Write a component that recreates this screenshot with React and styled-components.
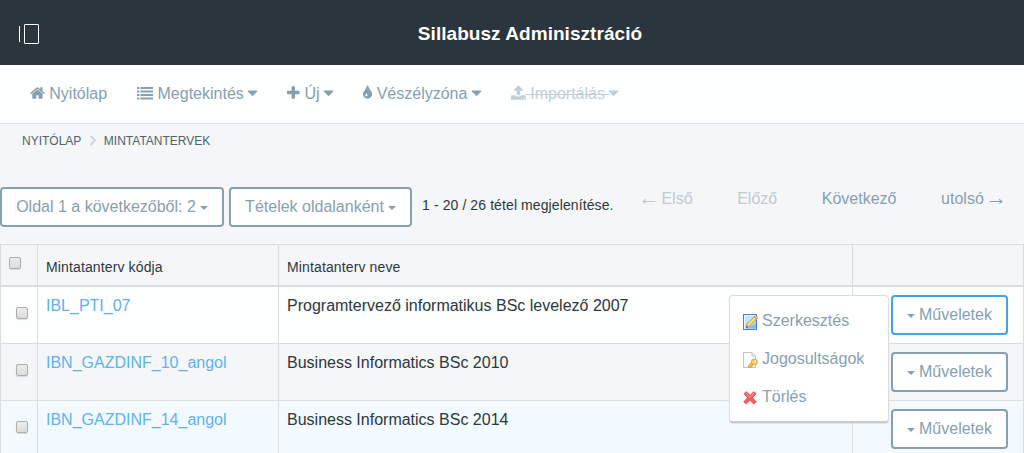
import React from "react";
import styled, { createGlobalStyle } from "styled-components";

const Global = createGlobalStyle`
  * { box-sizing: border-box; }
  html, body { margin: 0; height: 100%; overflow: hidden; }
  body {
    background: #f5f6f8;
    color: #2c3840;
    font: 16px/24px "Liberation Sans", Arial, sans-serif;
  }
`;

const slate = "#869fb1";
const line = "#dcdddf";

const Page = styled.div`
  width: 1024px;
  height: 453px;
  overflow: hidden;
`;

const Header = styled.header`
  display: grid;
  grid-template-columns: 81px 1fr 100px;
  align-items: center;
  height: 65px;
  padding: 0 0 0 19px;
  background: #2a353d;
`;

const Toggle = styled.button`
  display: flex;
  gap: 4px;
  width: 20px;
  height: 18px;
  padding: 0;
  margin-top: 3px;
  border: 0;
  background: none;
  align-items: center;
  &::before { content: ""; width: 1px; height: 16px; background: #fff; }
  &::after { content: ""; width: 15px; height: 18px; border: 1px solid #fff; border-radius: 1px; }
`;

const Title = styled.h1`
  margin: 0 -36px 0 0;
  padding-top: 2px;
  color: #fff;
  font-size: 19px;
  letter-spacing: 0.05px;
  line-height: 24px;
  text-align: center;
  white-space: nowrap;
`;

const Nav = styled.nav`
  display: flex;
  gap: 30px;
  height: 59px;
  padding: 17px 30px 0;
  background: #fdfefe;
  border-bottom: 1px solid #dfe3e7;
`;

const NavItem = styled.a`
  color: ${slate};
  white-space: nowrap;
  opacity: ${(p) => (p.$off ? 0.5 : 1)};
  text-decoration: ${(p) => (p.$off ? "line-through" : "none")};
`;

const Glyph = styled.svg`
  height: 16px;
  width: ${(p) => p.$w / 112}px;
  vertical-align: -2.3px;
  fill: currentColor;
`;

const glyphs = {
  home: [64, 1664, "M1472 992v480q0 26-19 45t-45 19h-384v-384h-256v384h-384q-26 0-45-19t-19-45v-480q0-1 .5-3t.5-3l575-474 575 474q1 2 1 6zm223-69l-62 74q-8 9-21 11h-3q-13 0-21-7l-692-577-692 577q-12 8-24 7-13-2-21-11l-62-74q-8-10-7-23.5t11-21.5l719-599q32-26 76-26t76 26l244 204v-195q0-14 9-23t23-9h192q14 0 23 9t9 23v408l219 182q10 8 11 21.5t-7 23.5z"],
  list: [0, 1792, "M0 224h256v224H0zM384 224h1408v224H384zM0 616h256v224H0zM384 616h1408v224H384zM0 1008h256v224H0zM384 1008h1408v224H384zM0 1400h256v224H0zM384 1400h1408v224H384z"],
  plus: [192, 1408, "M1600 736v192q0 40-28 68t-68 28h-416v416q0 40-28 68t-68 28h-192q-40 0-68-28t-28-68v-416h-416q-40 0-68-28t-28-68v-192q0-40 28-68t68-28h416v-416q0-40 28-68t68-28h192q40 0 68 28t28 68v416h416q40 0 68 28t28 68z"],
  drop: [384, 1024, "M896 1152q0-36-20-69-1-1-15.5-22.5t-25.5-38-25-44-21-50.5q-4-16-21-16t-21 16q-7 23-21 50.5t-25 44-25.5 38-15.5 22.5q-20 33-20 69 0 53 37.5 90.5t90.5 37.5 90.5-37.5 37.5-90.5zm512-128q0 212-150 362t-362 150-362-150-150-362q0-145 81-275 6-9 62.5-90.5t101-151 99.5-178 83-201.5q9-30 34-47t51-17 51.5 17 33.5 47q28 93 83 201.5t99.5 178 101 151 62.5 90.5q81 127 81 275z"],
  upload: [64, 1664, "M1344 1472q0-26-19-45t-45-19-45 19-19 45 19 45 45 19 45-19 19-45zm256 0q0-26-19-45t-45-19-45 19-19 45 19 45 45 19 45-19 19-45zm128-224v320q0 40-28 68t-68 28h-1472q-40 0-68-28t-28-68v-320q0-40 28-68t68-28h427q21 56 70.5 92t110.5 36h256q61 0 110.5-36t70.5-92h427q40 0 68 28t28 68zm-325-648q-17 40-59 40h-256v448q0 26-19 45t-45 19h-256q-26 0-45-19t-19-45v-448h-256q-42 0-59-40-17-39 14-69l448-448q18-19 45-19t45 19l448 448q31 30 14 69z"],
  caret: [384, 1024, "M1440 690q0 26-19 45l-480 470q-19 19-45 19t-45-19l-480-470q-19-19-19-45t19-45 45-19h960q26 0 45 19t19 45z"],
};

const Icon = ({ name }) => {
  const [x, w, d] = glyphs[name];
  return (
    <Glyph $w={w} viewBox={`${x} 0 ${w} 1792`} overflow="visible">
      <path d={d} />
    </Glyph>
  );
};

const Crumbs = styled.div`
  display: flex;
  align-items: center;
  height: 34px;
  padding: 0 22px;
  font-size: 12px;
  color: #4f626e;
  text-transform: uppercase;
`;

const Chevron = styled.svg`
  width: 8px;
  height: 11px;
  margin: 0 7px 1px 7.5px;
  fill: none;
  stroke: #d3d8dd;
  stroke-width: 2.2;
`;

const Toolbar = styled.div`
  display: flex;
  height: 86px;
  padding-top: 29px;
`;

const Button = styled.button`
  display: flex;
  align-items: center;
  justify-content: center;
  gap: 4px;
  width: ${(p) => p.$w}px;
  height: 40px;
  padding: 0;
  margin-right: 5px;
  border: 2px solid ${(p) => (p.$active ? "#42a3e9" : slate)};
  border-radius: 4px;
  background: #fff;
  color: ${slate};
  font: inherit;
  white-space: nowrap;
  flex: none;
`;

const Caret = styled.i`
  border: 4px solid transparent;
  border-top-color: currentColor;
  border-bottom: 0;
  margin-top: 2px;
`;

const Summary = styled.span`
  width: 219px;
  margin-left: 5px;
  padding-top: 6px;
  font-size: 14px;
  letter-spacing: 0.1px;
  white-space: nowrap;
`;

const Pager = styled.div`
  display: flex;
  gap: 44.6px;
`;

const PageLink = styled.a`
  color: ${(p) => (p.$off ? "#bfcbd3" : slate)};
  white-space: nowrap;
`;

const Arrow = styled.span`
  display: inline-block;
  width: 16px;
  margin: 0;
  font-size: 22px;
  line-height: 0;
  text-indent: -3px;
  vertical-align: -1px;
`;

const Row = styled.div`
  display: grid;
  grid-template-columns: 37px 241px 574px 172px;
  height: ${(p) => (p.$head ? 43 : 57)}px;
  background: ${(p) => p.$bg || "transparent"};
  border-top: ${(p) => (p.$head ? `1px solid ${line}` : "0")};
  border-bottom: ${(p) => (p.$head ? 2 : 1)}px solid ${line};
  font-size: ${(p) => (p.$head ? 14 : 16)}px;
  letter-spacing: ${(p) => (p.$head ? "0.13px" : "0")};
`;

const Cell = styled.div`
  position: relative;
  border-left: 1px solid ${line};
  padding: ${(p) => (p.$head ? 10 : 7)}px 8px 0;
  white-space: nowrap;
  &:last-child { border-right: 1px solid ${line}; padding: 8px 0 0 38px; }
`;

const Check = styled.input.attrs({ type: "checkbox" })`
  appearance: none;
  display: block;
  width: 12px;
  height: 12px;
  margin: ${(p) => (p.$head ? "2px 0 0" : "13px 0 0 7px")};
  border: 1px solid #adadad;
  border-radius: 2px;
  background: linear-gradient(#ececec, #dcdcdc);
  box-shadow: 0 1px 1px rgba(0, 0, 0, 0.12);
`;

const Link = styled.a`
  color: #5fb2ee;
`;

const Menu = styled.div`
  position: absolute;
  z-index: 2;
  top: 8px;
  left: -124px;
  width: 160px;
  height: 128px;
  padding: 6px 0 0 12px;
  border: 1px solid #dadcdf;
  border-bottom: 2px solid #c8cacc;
  border-radius: 4px;
  background: #fff;
  box-shadow: 0 1px 1px rgba(0, 0, 0, 0.08);
`;

const MenuItem = styled.a`
  display: flex;
  align-items: center;
  gap: 4px;
  height: 38px;
  color: ${slate};
  svg { width: 16px; height: 16px; margin-top: 2px; flex: none; }
`;

const EditIcon = () => (
  <svg viewBox="0 0 16 16">
    <rect x="1.5" y=".5" width="13" height="15" fill="#c4e2fb" stroke="#4582d0" />
    <path d="M2.5 1.5h11M2.5 2v13" stroke="#edf7ff" fill="none" />
    <path d="M3 14.5h11V9L9.5 12z" fill="#83bdf3" />
    <path d="M5 10L12 3l2.6 2.6L7.7 12.5l-3.5 1z" fill="#f5cf6a" stroke="#b08840" strokeWidth=".7" />
    <path d="M6.2 10.8l7-7" stroke="#fff0a0" />
    <path d="M12 3l1-1q1-.6 2 .4t.5 2L14.6 5.6z" fill="#f2b483" stroke="#b8896a" strokeWidth=".6" />
    <path d="M3.9 13.8l.6-2 1.6 1.5z" fill="#4b4238" />
  </svg>
);

const KeyIcon = () => (
  <svg viewBox="0 0 16 16">
    <path d="M1.5 .5H10l3.5 3.5v11.5h-12z" fill="#fafafa" stroke="#c4c4c4" />
    <path d="M10 .5v3.5h3.5" fill="#eee" stroke="#c4c4c4" />
    <path d="M9.8 10L6.5 13.4v2.1h2.4v-1h1.3v-1.2l1.6-1z" fill="#f5bf48" stroke="#d29a3c" strokeWidth=".8" />
    <circle cx="12.4" cy="10" r="3" fill="#f9cf65" stroke="#d29a3c" strokeWidth=".8" />
    <circle cx="13.3" cy="9.2" r=".9" fill="#fff" />
  </svg>
);

const DeleteIcon = () => (
  <svg viewBox="0 0 16 16">
    <path d="M4.2 1.6L8 5.3l3.8-3.7L14 3.8 10.5 7.8l3.7 4-2.3 2.3L8 10.3l-3.9 3.8-2.3-2.3 3.7-4L2 3.8z" fill="#fa6062" stroke="#e2454a" strokeWidth=".8" strokeLinejoin="round" />
    <path d="M4.1 3.2L8 6.9l3.9-3.7" fill="none" stroke="#ff9a96" />
  </svg>
);

const rows = [
  ["IBL_PTI_07", "Programtervező informatikus BSc levelező 2007", "#fdfefe"],
  ["IBN_GAZDINF_10_angol", "Business Informatics BSc 2010", "#f5f6f8"],
  ["IBN_GAZDINF_14_angol", "Business Informatics BSc 2014", "#f2faff"],
];

export default function App() {
  return (
    <Page>
      <Global />
      <Header>
        <Toggle aria-label="Menü" />
        <Title>Sillabusz Adminisztráció</Title>
      </Header>
      <Nav>
        <NavItem><Icon name="home" /> Nyitólap</NavItem>
        <NavItem><Icon name="list" /> Megtekintés <Icon name="caret" /></NavItem>
        <NavItem><Icon name="plus" /> Új <Icon name="caret" /></NavItem>
        <NavItem><Icon name="drop" /> Vészélyzóna <Icon name="caret" /></NavItem>
        <NavItem $off><Icon name="upload" /> Importálás <Icon name="caret" /></NavItem>
      </Nav>
      <Crumbs>
        <span>Nyitólap</span>
        <Chevron viewBox="0 0 8 11"><path d="M1.5 1L6 5.5 1.5 10" /></Chevron>
        <span>Mintatantervek</span>
      </Crumbs>
      <Toolbar>
        <Button $w={224}>Oldal 1 a következőből: 2 <Caret /></Button>
        <Button $w={183}>Tételek oldalanként <Caret /></Button>
        <Summary>1 - 20 / 26 tétel megjelenítése.</Summary>
        <Pager>
          <PageLink $off><Arrow>←</Arrow> Első</PageLink>
          <PageLink $off>Előző</PageLink>
          <PageLink>Következő</PageLink>
          <PageLink>utolsó <Arrow>→</Arrow></PageLink>
        </Pager>
      </Toolbar>
      <Row $head>
        <Cell $head><Check $head /></Cell>
        <Cell $head>Mintatanterv kódja</Cell>
        <Cell $head>Mintatanterv neve</Cell>
        <Cell $head />
      </Row>
      {rows.map(([code, name, bg], i) => (
        <Row key={code} $bg={bg}>
          <Cell><Check /></Cell>
          <Cell><Link>{code}</Link></Cell>
          <Cell>{name}</Cell>
          <Cell>
            <Button $w={117} $active={i === 0}><Caret /> Műveletek</Button>
            {i === 0 && (
              <Menu>
                <MenuItem><EditIcon />Szerkesztés</MenuItem>
                <MenuItem><KeyIcon />Jogosultságok</MenuItem>
                <MenuItem><DeleteIcon />Törlés</MenuItem>
              </Menu>
            )}
          </Cell>
        </Row>
      ))}
    </Page>
  );
}
